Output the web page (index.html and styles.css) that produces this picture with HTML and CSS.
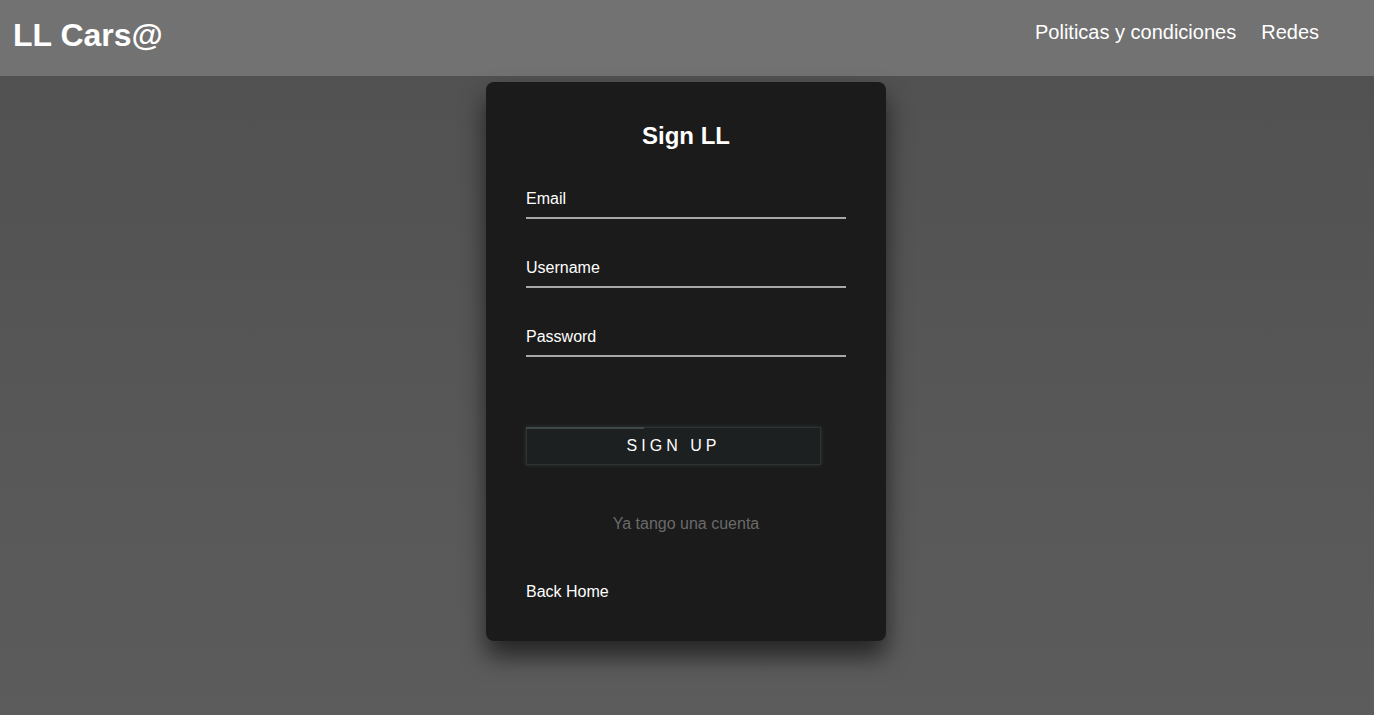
FILE: index.html
```html
<!DOCTYPE html>
<html lang="es">
<head>
<meta charset="utf-8">
<title>LL Cars@ - Sign</title>
<link rel="stylesheet" href="styles.css">
</head>
<body>
<header class="topbar">
  <div class="logo">LL Cars@</div>
  <nav class="nav">
    <a href="#">Politicas y condiciones</a>
    <a href="#">Redes</a>
  </nav>
</header>
<main class="main">
  <div class="login-box">
    <h2 class="title">Sign LL</h2>
    <form class="form">
      <div class="user-box"><span class="label">Email</span></div>
      <div class="user-box"><span class="label">Username</span></div>
      <div class="user-box"><span class="label">Password</span></div>
      <button type="button" class="btn"><span class="btn-line"></span>SIGN UP</button>
    </form>
    <p class="have">Ya tango una cuenta</p>
    <a class="back" href="#">Back Home</a>
  </div>
</main>
</body>
</html>
```
FILE: styles.css
```css
* { box-sizing: border-box; }
html, body { height: 100%; }
body {
  margin: 0;
  font-family: "Liberation Sans", Arial, sans-serif;
  background: linear-gradient(#505050, #5c5c5c);
  color: #fff;
  min-height: 715px;
}
.topbar {
  height: 76px;
  background: #727272;
  display: flex;
  align-items: flex-start;
  justify-content: space-between;
  padding: 0 55px 0 13px;
}
.logo {
  font-size: 32px;
  font-weight: bold;
  line-height: 37px;
  margin-top: 17px;
}
.nav {
  display: flex;
  gap: 25px;
  margin-top: 21px;
}
.nav a {
  color: #fff;
  text-decoration: none;
  font-size: 20px;
  line-height: 23px;
}
.main {
  display: flex;
  justify-content: center;
  padding-top: 6px;
  padding-right: 2px;
}
.login-box {
  width: 400px;
  padding: 40px;
  background: #1b1b1b;
  border-radius: 8px;
  box-shadow: 0 15px 25px rgba(0, 0, 0, 0.6);
}
.title {
  margin: 0 0 30px;
  font-size: 24px;
  line-height: 28px;
  text-align: center;
}
.form { display: flex; flex-direction: column; align-items: flex-start; }
.user-box {
  width: 100%;
  padding: 10px 0 9px;
  border-bottom: 2px solid #a8a8a8;
  margin-bottom: 30px;
  font-size: 16px;
  line-height: 18px;
}
.btn {
  position: relative;
  margin-top: 40px;
  width: 295px;
  height: 38px;
  background: #1d2020;
  border: 1px solid #2e3434;
  box-shadow: 0 0 4px rgba(120, 140, 140, 0.25);
  color: #fff;
  font-family: inherit;
  font-size: 16px;
  letter-spacing: 4px;
  padding: 0;
}
.btn-line {
  position: absolute;
  top: -1px;
  left: -1px;
  width: 118px;
  height: 2px;
  background: #3f4848;
}
.have {
  margin: 50px 0 0;
  text-align: center;
  color: #6a6a6a;
  font-size: 16px;
  line-height: 18px;
}
.back {
  display: block;
  margin-top: 50px;
  color: #fff;
  text-decoration: none;
  font-size: 16px;
  line-height: 18px;
}
```
